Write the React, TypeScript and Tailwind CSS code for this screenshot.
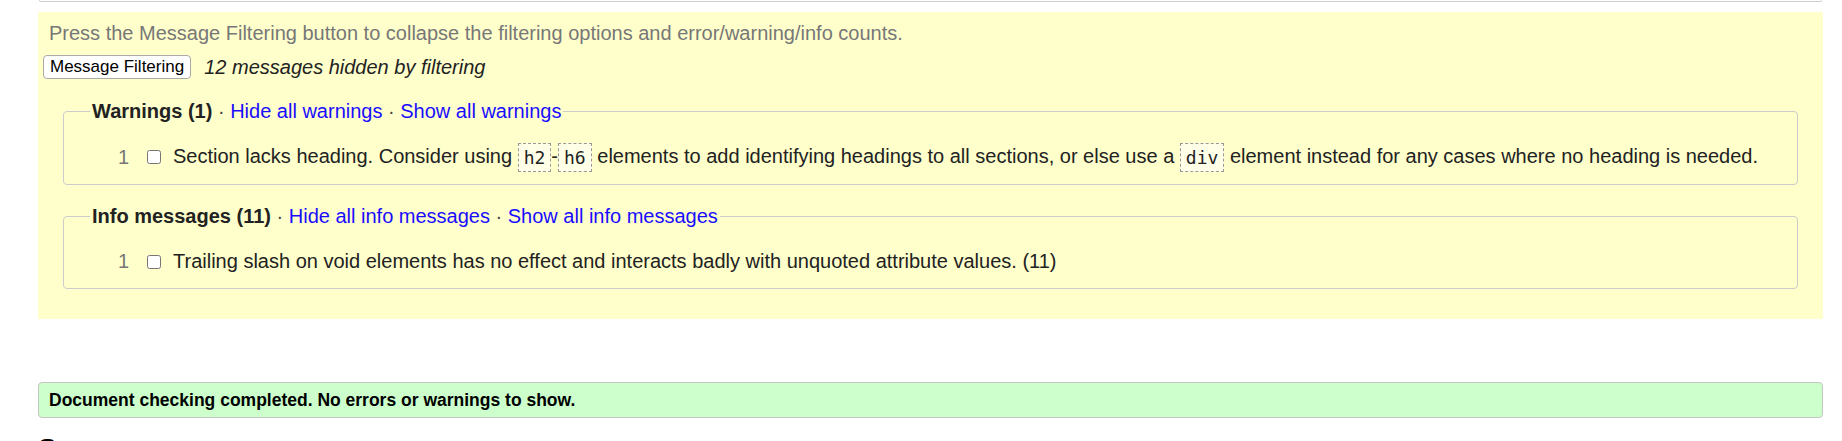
import React from 'react';

const sans = "font-['Liberation_Sans',Arial,sans-serif]";

function Code({ children }: { children: React.ReactNode }) {
  return (
    <code className="inline-block border border-dashed border-[#999] bg-[#ffffe8] px-[5px] font-['DejaVu_Sans_Mono',monospace] text-[18px] leading-[27px] text-[#222] align-middle">
      {children}
    </code>
  );
}

function Group({
  title,
  hide,
  show,
  children,
}: {
  title: string;
  hide: string;
  show: string;
  children: React.ReactNode;
}) {
  return (
    <fieldset className="mx-[25px] rounded-[4px] border border-[#cccccc] pb-[12px] pt-[19px]">
      <legend className="ml-[26px] px-[2px] text-[20px] leading-[23px]">
        <b className="text-[#222]">{title}</b>
        <span className="text-[#444]"> · </span>
        <a href="#" className="text-[#1a0dff]">{hide}</a>
        <span className="text-[#444]"> · </span>
        <a href="#" className="text-[#1a0dff]">{show}</a>
      </legend>
      {children}
    </fieldset>
  );
}

function Row({ n, children }: { n: number; children: React.ReactNode }) {
  return (
    <div className="flex items-center text-[20px] leading-[29px]">
      <span className="w-[65px] text-right text-[#777]">{n}</span>
      <input type="checkbox" className="ml-[18px] mr-[12px] h-[14px] w-[14px]" />
      <span className="text-[#222]">{children}</span>
    </div>
  );
}

export default function App() {
  return (
    <div className={`${sans} bg-white h-[441px] overflow-hidden`}>
      <div className="ml-[39px] mr-[20px] h-[2px] rounded-b-[3px] border border-t-0 border-[#cccccc]" />

      <div className="ml-[38px] mr-[19px] mt-[10px] bg-[#ffffcc] px-[11px] pt-[10px] pb-[30px]">
        <p className="text-[20px] leading-[23px] text-[#777]">
          Press the Message Filtering button to collapse the filtering options and error/warning/info counts.
        </p>
        <div className="mt-[10px] flex items-center gap-[13px]">
          <button className="-ml-[6px] h-[24px] rounded-[4px] border border-[#aaa] bg-white px-[6px] text-[17px] leading-[20px] text-black">
            Message Filtering
          </button>
          <i className="text-[20px] leading-[23px] text-[#222]">12 messages hidden by filtering</i>
        </div>

        <div className="-mx-[11px] mt-[21px] flex flex-col gap-[20px]">
          <Group title="Warnings (1)" hide="Hide all warnings" show="Show all warnings">
            <Row n={1}>
              Section lacks heading. Consider using <Code>h2</Code>-<Code>h6</Code> elements to add identifying
              headings to all sections, or else use a <Code>div</Code> element instead for any cases where no heading
              is needed.
            </Row>
          </Group>
          <Group title="Info messages (11)" hide="Hide all info messages" show="Show all info messages">
            <Row n={1}>Trailing slash on void elements has no effect and interacts badly with unquoted attribute values. (11)</Row>
          </Group>
        </div>
      </div>

      <div className="ml-[38px] mr-[19px] mt-[63px] h-[36px] rounded-[4px] border border-[#c4c4c4] bg-[#ccffcc] px-[10px] flex items-center">
        <b className="text-[17.5px] text-black">Document checking completed. No errors or warnings to show.</b>
      </div>

      <h2 className="ml-[38px] mt-[15px] text-[28px] font-bold leading-[32px] text-black">Source</h2>
    </div>
  );
}
